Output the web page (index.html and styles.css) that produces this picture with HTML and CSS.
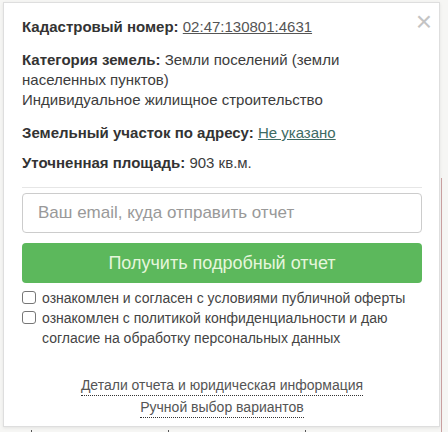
FILE: index.html
```html
<!DOCTYPE html>
<html lang="ru">
<head>
<meta charset="utf-8">
<link rel="stylesheet" href="styles.css">
</head>
<body>
<div class="stage">
  <div class="popup">
    <span class="close">&times;</span>
    <p class="row r1"><b>Кадастровый номер:</b> <a class="lnk" href="#">02:47:130801:4631</a></p>
    <p class="row r2"><b>Категория земель:</b> Земли поселений (земли населенных пунктов)<br>Индивидуальное жилищное строительство</p>
    <p class="row r3"><b>Земельный участок по адресу:</b> <a class="lnk teal" href="#">Не указано</a></p>
    <p class="row r4"><b>Уточненная площадь:</b> 903 кв.м.</p>
    <hr class="sep">
    <div class="email">Ваш email, куда отправить отчет</div>
    <div class="btn">Получить подробный отчет</div>
    <div class="checks">
      <label class="check"><span class="box"></span><span>ознакомлен и согласен с условиями публичной оферты</span></label>
      <label class="check"><span class="box"></span><span>ознакомлен с политикой конфиденциальности и даю согласие на обработку персональных данных</span></label>
    </div>
    <div class="links">
      <a class="dotted" href="#">Детали отчета и юридическая информация</a>
      <a class="dotted" href="#">Ручной выбор вариантов</a>
    </div>
  </div>
  <div class="redline"></div>
  <div class="tick t1"></div>
  <div class="tick t2"></div>
  <div class="tick t3"></div>
</div>
</body>
</html>
```
FILE: styles.css
```css
html, body {
  margin: 0;
  padding: 0;
}
body {
  background: #f6f6f4;
  font-family: "Liberation Sans", Arial, sans-serif;
  font-size: 15px;
  color: #3a3a3a;
  width: 448px;
  height: 432px;
  overflow: hidden;
}
.stage {
  position: relative;
  width: 448px;
  height: 432px;
}
.popup {
  position: relative;
  margin: 2px 0 0 3px;
  width: 400px;
  height: 409px;
  padding: 14px 17px 0 18px;
  background: #fff;
  border: 1px solid #dedede;
  box-shadow: 0 1px 3px rgba(0,0,0,0.08);
}
.redline {
  position: absolute;
  left: 441px;
  top: 176px;
  width: 1px;
  height: 256px;
  background: #c9a0a0;
}
.tick {
  position: absolute;
  top: 428px;
  width: 1px;
  height: 4px;
  background: #555;
}
.t1 { left: 31px; }
.t2 { left: 168px; }
.t3 { left: 305px; }
.close {
  position: absolute;
  right: 7px;
  top: 5px;
  font-size: 28px;
  line-height: 28px;
  color: #c4c4c4;
}
.row {
  margin: 0;
  line-height: 20px;
  color: #3c3c3c;
}
.r1, .r2 { margin-bottom: 13px; }
.r3 { margin-bottom: 10px; }
.row b {
  color: #333;
}
.lnk {
  color: #555;
  text-decoration: underline;
}
.lnk.teal {
  color: #3d6b63;
}
.sep {
  border: 0;
  border-top: 1px solid #e6e6e6;
  margin: 14px 0 5px 0;
}
.email {
  height: 38px;
  border: 1px solid #ccc;
  border-radius: 4px;
  padding: 0 15px;
  font-size: 17px;
  line-height: 38px;
  color: #999;
}
.btn {
  margin-top: 10px;
  height: 40px;
  border-radius: 4px;
  background: #5cb85c;
  color: #e6f6dc;
  font-size: 18px;
  line-height: 40px;
  text-align: center;
}
.checks {
  margin-top: 5px;
}
.check {
  display: flex;
  gap: 6px;
  font-size: 14px;
  line-height: 20px;
  color: #444;
}
.box {
  flex: none;
  width: 12px;
  height: 11px;
  margin-top: 3px;
  border: 1px solid #777;
  border-radius: 3px;
}
.links {
  margin-top: 28px;
  display: flex;
  flex-direction: column;
  align-items: center;
  gap: 2px;
  font-size: 14px;
}
.dotted {
  color: #555;
  text-decoration: none;
  border-bottom: 1px dotted #333;
  line-height: 19px;
}
```
